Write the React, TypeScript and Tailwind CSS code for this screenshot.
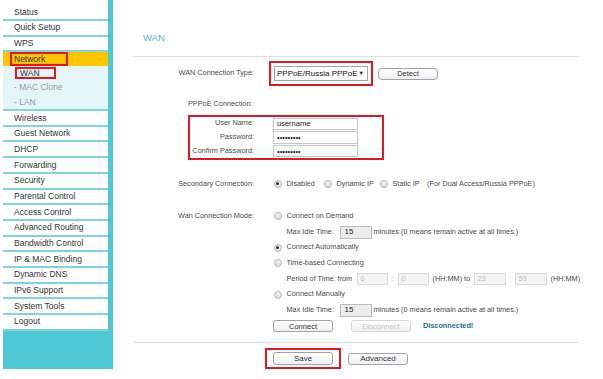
import React from 'react';

const menu = [
  'Wireless',
  'Guest Network',
  'DHCP',
  'Forwarding',
  'Security',
  'Parental Control',
  'Access Control',
  'Advanced Routing',
  'Bandwidth Control',
  'IP & MAC Binding',
  'Dynamic DNS',
  'IPv6 Support',
  'System Tools',
  'Logout',
];

function Radio({ checked = false }: { checked?: boolean }) {
  return (
    <span className="w-[8px] h-[8px] rounded-full border border-[#b4b4b4] bg-gradient-to-b from-[#f6f6f6] to-[#dcdcdc] flex items-center justify-center shrink-0">
      {checked && <span className="w-[3px] h-[3px] rounded-full bg-[#333]" />}
    </span>
  );
}

function Btn({ label, disabled = false, className = '' }: { label: string; disabled?: boolean; className?: string }) {
  return (
    <div
      className={`w-[60px] h-[12px] rounded-[3px] border bg-gradient-to-b from-white to-[#f0f0f0] flex items-center justify-center text-[7.5px] ${
        disabled ? 'border-[#d6d6d6] text-[#c4c4c4]' : 'border-[#a3a3a3] text-[#333]'
      } ${className}`}
    >
      {label}
    </div>
  );
}

function Label({ text }: { text: string }) {
  return (
    <div className="w-[121px] shrink-0 flex justify-end">
      <span className="whitespace-nowrap">{text}</span>
    </div>
  );
}

function ModeRow({ children, label = '' }: { children?: React.ReactNode; label?: string }) {
  return (
    <div className="h-[15.7px] flex items-center">
      <Label text={label} />
      <div className="ml-[19.5px] flex items-center whitespace-nowrap">{children}</div>
    </div>
  );
}

export default function App() {
  return (
    <div className="w-[603px] h-[379px] bg-white flex font-['Liberation_Sans',Arial,sans-serif] overflow-hidden">
      {/* left menu */}
      <aside className="ml-[3px] w-[110px] h-[369px] bg-[#4cc9d5] pr-[5px] text-[8.5px] text-[#333]">
        <div className="h-[21px] pt-[6px] bg-white border-b-2 border-[#7dd5df] pl-[11px] flex items-center">Status</div>
        <div className="h-[15.7px] bg-white border-b-2 border-[#7dd5df] pl-[11px] flex items-center">Quick Setup</div>
        <div className="h-[15.7px] bg-white border-b-2 border-[#7dd5df] pl-[11px] flex items-center">WPS</div>
        <div className="h-[13.7px] bg-[#ffc600] pl-[7px] flex items-stretch">
          <div className="w-[58px] border-2 border-[#e8141e] flex items-center pl-[2px]">Network</div>
        </div>
        <div className="h-[45px] bg-[#e4f5f7] border-b-2 border-[#7dd5df] flex flex-col">
          <div className="h-[14.33px] flex items-center pl-[12px]">
            <div className="w-[41px] h-[12px] border-2 border-[#e8141e] flex items-center pl-[3px]">WAN</div>
          </div>
          <div className="h-[14.33px] flex items-center pl-[11px] text-[#9a9a9a]">- MAC Clone</div>
          <div className="h-[14.33px] flex items-center pl-[11px] text-[#9a9a9a]">- LAN</div>
        </div>
        {menu.map((m) => (
          <div key={m} className="h-[15.7px] bg-white border-b-2 border-[#7dd5df] pl-[11px] flex items-center">
            {m}
          </div>
        ))}
      </aside>

      {/* content */}
      <main className="ml-[20px] w-[446px] text-[7.3px] text-[#4a4a4a]">
        <div className="mt-[30px] h-[16px] pl-[10px] flex items-center text-[9.5px] text-[#4fbccd]">WAN</div>
        <div className="mt-[10px] h-[1px] bg-[#dedede]" />

        <div className="mt-[4px] h-[25px] flex items-center">
          <Label text="WAN Connection Type:" />
          <div className="ml-[15px] border-2 border-[#e8141e] px-[3px] py-[3px]">
            <div className="w-[94px] h-[15px] border border-[#a6a6a6] bg-white flex items-center justify-between pl-[2px] pr-[3px] text-[8px] text-[#111]">
              <span>PPPoE/Russia PPPoE</span>
              <span className="text-[5.5px]">▼</span>
            </div>
          </div>
          <Btn label="Detect" className="ml-[5px] w-[59px] rounded-[4px]" />
        </div>

        <div className="mt-[12px] h-[12px] pl-[55px] flex items-center">PPPoE Connection:</div>

        <div className="mt-[5px] ml-[55px] w-[196px] border-2 border-[#e8141e]">
          {[
            ['User Name:', 'username'],
            ['Password:', '•••••••••'],
            ['Confirm Password:', '•••••••••'],
          ].map(([l, v]) => (
            <div key={l} className="h-[13.67px] flex items-center">
              <div className="w-[64px] flex justify-end">
                <span className="whitespace-nowrap">{l}</span>
              </div>
              <div className="ml-[19px] w-[85px] h-[12.5px] border border-[#c8c8c8] bg-white flex items-center pl-[3px] text-[7.5px] text-[#222]">
                {v}
              </div>
            </div>
          ))}
        </div>

        <div className="mt-[17px] h-[14px] flex items-center">
          <Label text="Secondary Connection:" />
          <div className="ml-[19.5px] flex items-center whitespace-nowrap">
            <div className="w-[50px] flex items-center gap-[5px]">
              <Radio checked />
              <span>Disabled</span>
            </div>
            <div className="w-[56px] flex items-center gap-[5px]">
              <Radio />
              <span>Dynamic IP</span>
            </div>
            <div className="w-[47.5px] flex items-center gap-[5px]">
              <Radio />
              <span>Static IP</span>
            </div>
            <span>(For Dual Access/Russia PPPoE)</span>
          </div>
        </div>

        <div className="mt-[17.5px]">
          <ModeRow label="Wan Connection Mode:">
            <Radio />
            <span className="ml-[5px]">Connect on Demand</span>
          </ModeRow>
          <ModeRow>
            <span className="ml-[13px] w-[53px]">Max Idle Time:</span>
            <div className="w-[32px] h-[13px] border border-[#bcbcbc] bg-[#ececec] flex items-center pl-[4px] text-[8px] text-[#222]">15</div>
            <span className="ml-[2px]">minutes (0 means remain active at all times.)</span>
          </ModeRow>
          <ModeRow>
            <Radio checked />
            <span className="ml-[5px]">Connect Automatically</span>
          </ModeRow>
          <ModeRow>
            <Radio />
            <span className="ml-[5px]">Time-based Connecting</span>
          </ModeRow>
          <ModeRow>
            <span className="ml-[13px] w-[70px]">Period of Time: from</span>
            <div className="w-[31px] h-[12px] border border-[#dadada] bg-[#f4f4f4] flex items-center pl-[3px] text-[7.5px] text-[#c0c0c0]">0</div>
            <span className="w-[10px] text-center text-[#aaa]">:</span>
            <div className="w-[31px] h-[12px] border border-[#dadada] bg-[#f4f4f4] flex items-center pl-[3px] text-[7.5px] text-[#c0c0c0]">0</div>
            <span className="w-[45px] pl-[4px]">(HH:MM) to</span>
            <div className="w-[32px] h-[12px] border border-[#dadada] bg-[#f4f4f4] flex items-center pl-[3px] text-[7.5px] text-[#c0c0c0]">23</div>
            <span className="w-[9px] text-center text-[#aaa]">:</span>
            <div className="w-[32px] h-[12px] border border-[#dadada] bg-[#f4f4f4] flex items-center pl-[3px] text-[7.5px] text-[#c0c0c0]">59</div>
            <span className="pl-[4px]">(HH:MM)</span>
          </ModeRow>
          <ModeRow>
            <Radio />
            <span className="ml-[5px]">Connect Manually</span>
          </ModeRow>
          <ModeRow>
            <span className="ml-[13px] w-[53px]">Max Idle Time:</span>
            <div className="w-[32px] h-[13px] border border-[#bcbcbc] bg-[#ececec] flex items-center pl-[4px] text-[8px] text-[#222]">15</div>
            <span className="ml-[2px]">minutes (0 means remain active at all times.)</span>
          </ModeRow>
          <ModeRow>
            <Btn label="Connect" className="-ml-[0.5px]" />
            <Btn label="Disconnect" disabled className="ml-[18px]" />
            <span className="ml-[12px] font-bold text-[#1c6f7f]">Disconnected!</span>
          </ModeRow>
        </div>

        <div className="mt-[8.5px] h-[1px] w-[445px] bg-[#dedede]" />

        <div className="mt-[5px] flex items-center">
          <div className="ml-[132px] border-2 border-[#e8141e] px-[6px] py-[2px]">
            <Btn label="Save" className="h-[13px] border-[#8fb3bb] text-[8px]" />
          </div>
          <Btn label="Advanced" className="ml-[7px] text-[8px]" />
        </div>
      </main>
    </div>
  );
}
